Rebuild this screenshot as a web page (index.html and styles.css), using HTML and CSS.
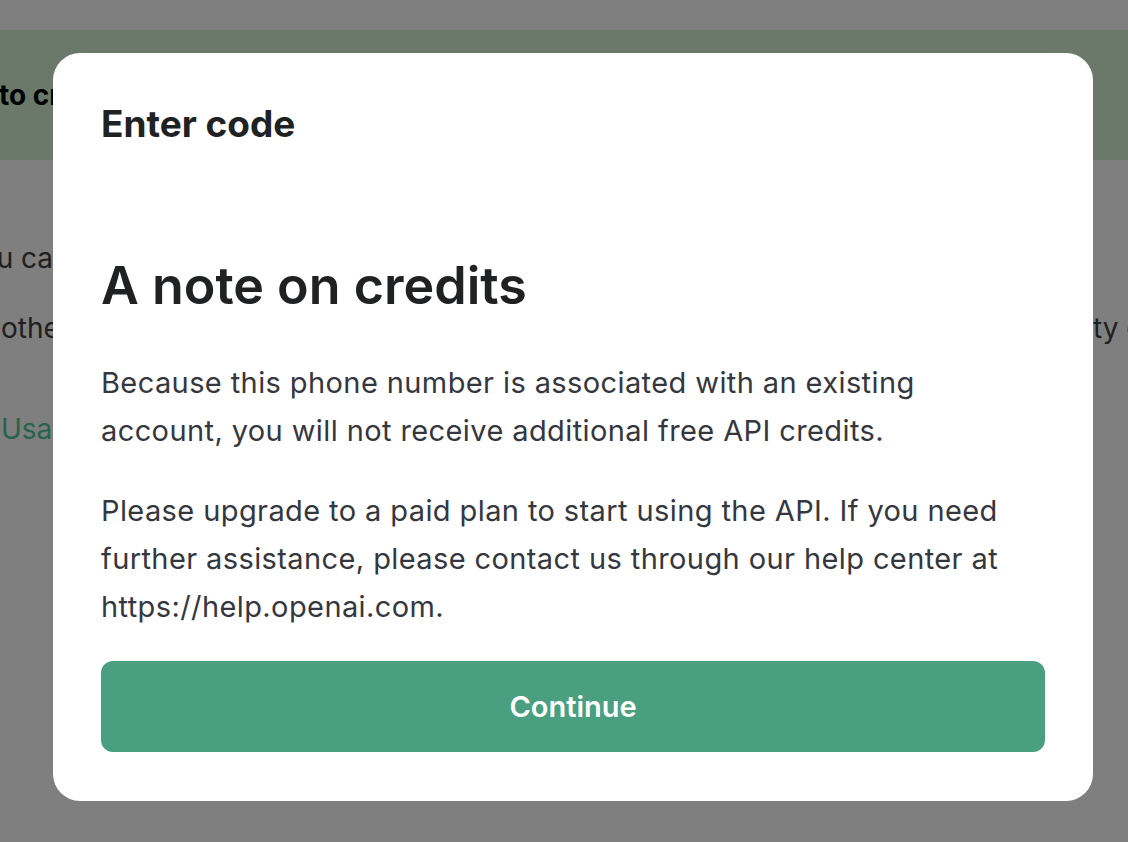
FILE: index.html
```html
<!DOCTYPE html>
<html lang="en">
<head>
  <meta charset="UTF-8" />
  <meta name="viewport" content="width=device-width, initial-scale=1.0"/>
  <title>Enter code</title>
  <link rel="stylesheet" href="styles.css">
</head>
<body>
  <div class="page">
    <div class="banner">
      <span class="banner-text">to create an API key, verify your phone number</span>
    </div>
    <div class="page-body">
      <p class="page-line first">You can use your free trial credits to get started.</p>
      <p class="page-line second">other <span class="right-bit">ty of</span></p>
      <a class="page-link" href="#">Usage</a>
    </div>
  </div>

  <div class="overlay">
    <div class="modal">
      <div class="modal-title">Enter code</div>
      <h2 class="modal-heading">A note on credits</h2>
      <p class="modal-text">Because this phone number is associated with an existing account, you will not receive additional free API credits.</p>
      <p class="modal-text">Please upgrade to a paid plan to start using the API. If you need further assistance, please contact us through our help center at https://help.openai.com.</p>
      <button class="btn-continue" type="button">Continue</button>
    </div>
  </div>
</body>
</html>
```

FILE: styles.css
```css
html, body {
  margin: 0;
  height: 100%;
}
body {
  font-family: Inter, "Noto Sans", sans-serif;
  background: #fff;
  color: #353740;
  overflow: hidden;
}

/* page behind the dialog */
.page {
  padding-top: 30px;
}
.banner {
  background: #d6f2d6;
  height: 130px;
  display: flex;
  align-items: center;
  overflow: hidden;
}
.banner-text {
  margin-left: -1px;
  font-size: 28px;
  font-weight: 700;
  color: #000;
  white-space: nowrap;
}
.page-body {
  position: relative;
  padding-top: 78px;
}
.page-line {
  margin: 0 0 30px;
  font-size: 28px;
  line-height: 40px;
  white-space: nowrap;
  color: #404040;
}
.page-line.first {
  margin-left: -37px;
}
.page-line.second {
  margin-left: 1px;
}
.right-bit {
  position: absolute;
  left: 1093px;
}
.page-link {
  display: block;
  margin-top: 64px;
  margin-left: 1px;
  font-size: 28px;
  color: #4fc79a;
  text-decoration: none;
}

/* dialog */
.overlay {
  position: fixed;
  inset: 0;
  background: rgba(0, 0, 0, 0.5);
  padding: 53px 0 0 53px;
}
.modal {
  width: 1040px;
  box-sizing: border-box;
  background: #fff;
  border-radius: 27px;
  padding: 51px 48px 49px;
}
.modal-title {
  font-size: 37px;
  line-height: 40px;
  font-weight: 700;
  color: #202123;
}
.modal-heading {
  margin: 114px 0 45px;
  font-size: 52px;
  line-height: 56px;
  font-weight: 600;
  color: #202123;
}
.modal-text {
  max-width: 915px;
  margin: 0 0 32px;
  font-size: 29px;
  line-height: 48px;
  letter-spacing: 0.4px;
  color: #353740;
}
.modal-text:last-of-type {
  margin-bottom: 30px;
}
.btn-continue {
  display: block;
  width: 100%;
  height: 91px;
  border: none;
  border-radius: 12px;
  background: #4a9f80;
  color: #fff;
  font-family: inherit;
  font-size: 29px;
  font-weight: 600;
}
```
